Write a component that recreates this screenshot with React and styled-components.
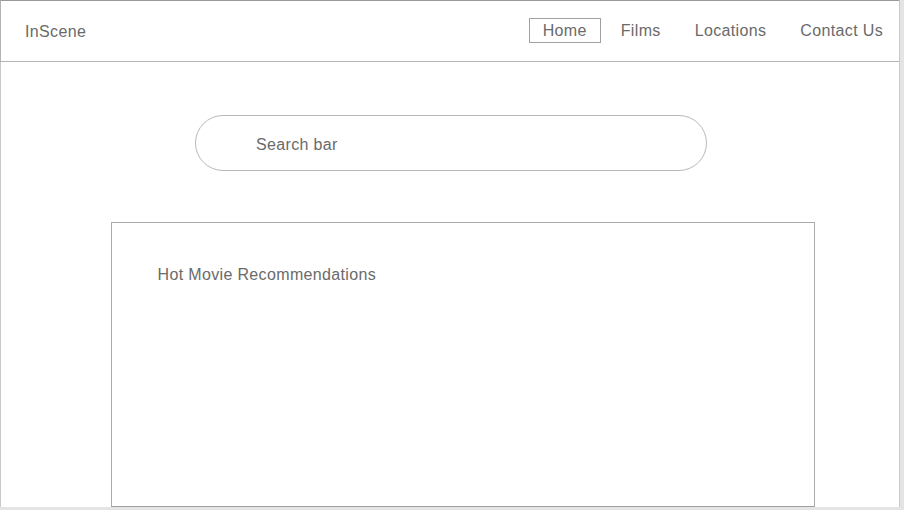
import React from 'react'
import styled, { createGlobalStyle } from 'styled-components'

const GlobalStyle = createGlobalStyle`
  html, body {
    margin: 0;
    padding: 0;
    background: #e4e4e4;
    font-family: 'Liberation Sans', Arial, sans-serif;
    letter-spacing: 0.35px;
  }
`

const textColor = '#6a6a6a'

const Frame = styled.div`
  width: 899px;
  height: 507px;
  background: #ffffff;
  border-right: 1px solid #c8c8c8;
  display: flex;
  flex-direction: column;
  overflow: hidden;
`

const Header = styled.header`
  height: 58px;
  display: flex;
  align-items: center;
  justify-content: space-between;
  border: 1px solid #b4b4b4;
  border-top-color: #999999;
  border-right: none;
  padding: 2px 2px 0 24px;
  flex-shrink: 0;
`

const Brand = styled.div`
  font-size: 16px;
  color: ${textColor};
`

const Nav = styled.nav`
  display: flex;
  align-items: center;
  gap: 6px;
  margin-bottom: 4px;
`

const NavItem = styled.a`
  font-size: 16px;
  color: ${textColor};
  text-decoration: none;
  padding: 3px 13px 2px;
  border: 1px solid ${(p) => (p.active ? '#a0a0a0' : 'transparent')};
  line-height: 18px;
`

const Main = styled.main`
  flex: 1;
  display: flex;
  flex-direction: column;
  align-items: center;
  border-left: 1px solid #c8c8c8;
`

const SearchBar = styled.div`
  margin-top: 53px;
  margin-left: 2px;
  width: 512px;
  height: 56px;
  box-sizing: border-box;
  border: 1px solid #b8b8b8;
  border-radius: 28px;
  display: flex;
  align-items: center;
  padding: 3px 0 0 60px;
  font-size: 16px;
  color: ${textColor};
`

const Card = styled.section`
  margin-top: 51px;
  margin-left: 25px;
  width: 704px;
  flex: 1;
  box-sizing: border-box;
  border: 1px solid #ababab;
  border-bottom-color: #a0a0a0;
  padding: 43px 46px;
`

const CardTitle = styled.h2`
  margin: 0;
  font-size: 16px;
  font-weight: normal;
  color: ${textColor};
`

export default function App() {
  const links = ['Home', 'Films', 'Locations', 'Contact Us']
  return (
    <>
      <GlobalStyle />
      <Frame>
        <Header>
          <Brand>InScene</Brand>
          <Nav>
            {links.map((l) => (
              <NavItem key={l} href="#" active={l === 'Home' ? 1 : 0}>
                {l}
              </NavItem>
            ))}
          </Nav>
        </Header>
        <Main>
          <SearchBar>Search bar</SearchBar>
          <Card>
            <CardTitle>Hot Movie Recommendations</CardTitle>
          </Card>
        </Main>
      </Frame>
    </>
  )
}
